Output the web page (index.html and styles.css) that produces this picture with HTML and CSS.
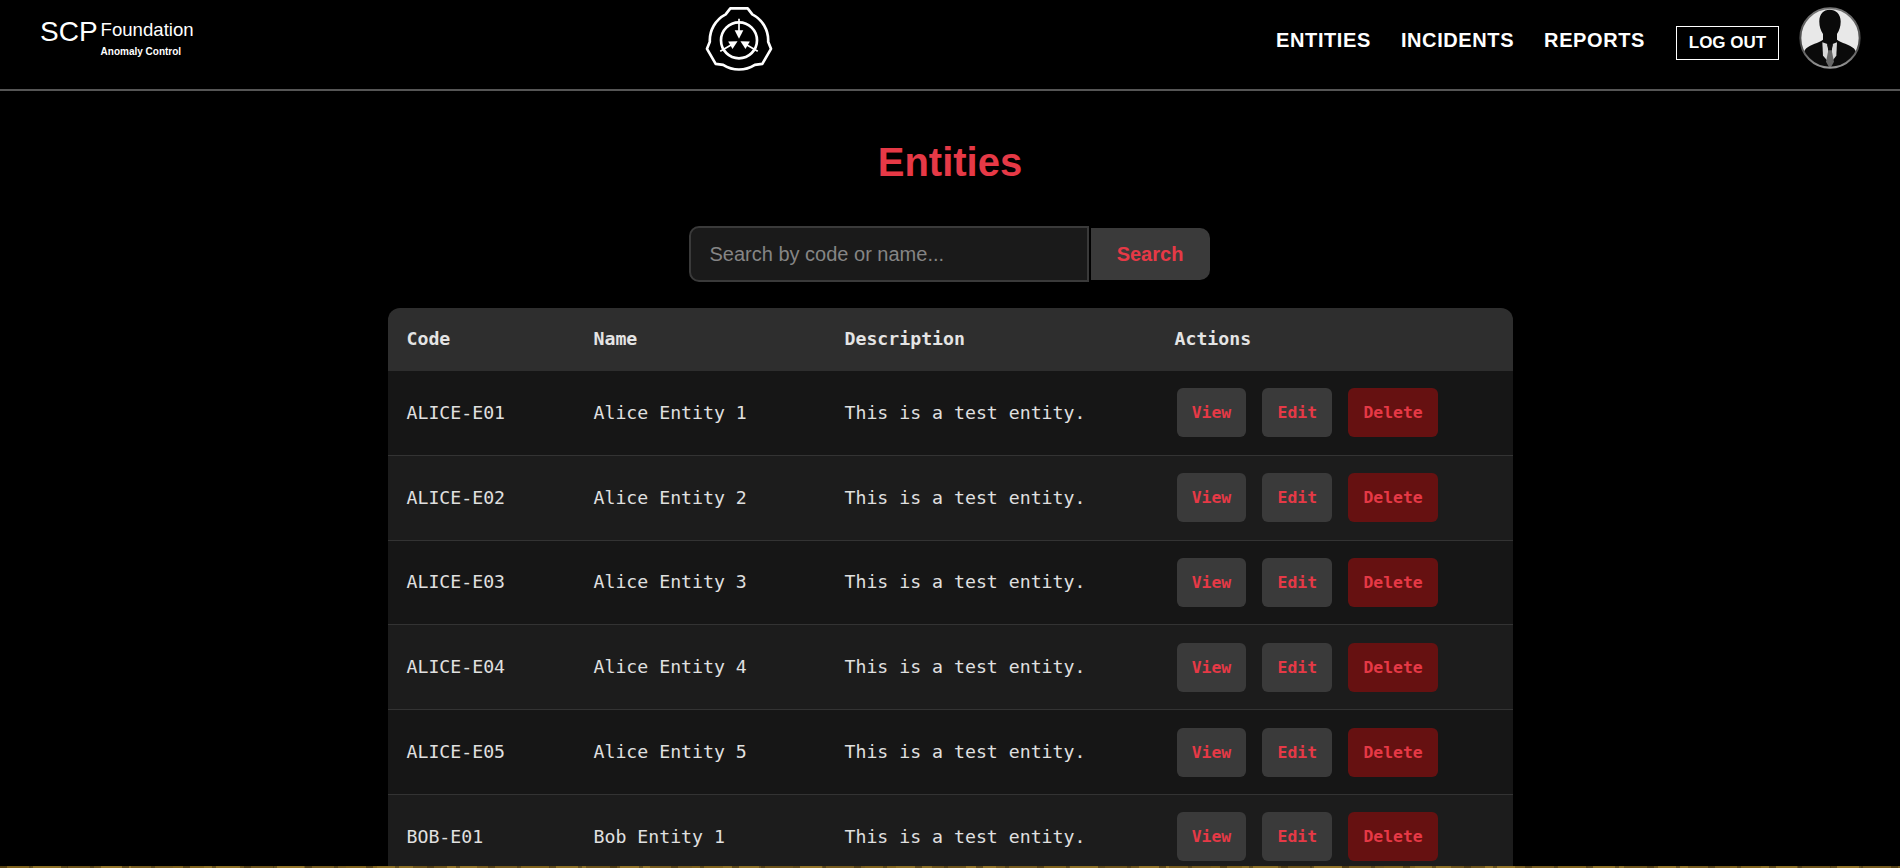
FILE: index.html
```html
<!DOCTYPE html>
<html lang="en">
<head>
<meta charset="utf-8">
<title>Entities</title>
<link rel="stylesheet" href="styles.css">
</head>
<body>
<div class="page">
  <header class="topbar">
    <a class="brand">
      <span class="brand-scp">SCP</span>
      <span class="brand-text">
        <span class="brand-name">Foundation</span>
        <span class="brand-sub">Anomaly Control</span>
      </span>
    </a>
    <svg class="seal" viewBox="0 0 360 270" aria-label="SCP logo">
      <path class="seal-line" d="M131 40 L145 22 H197 L211 40 A88 88 0 0 1 258.5 122.4 L267 143.5 L241 188.5 L218.5 191.6 A88 88 0 0 1 123.5 191.6 L101 188.5 L75 143.5 L83.5 122.4 A88 88 0 0 1 131 40Z"/>
      <circle class="seal-line" cx="171" cy="118" r="54"/>
      <g>
        <path class="seal-thin" d="M171 53V95"/>
        <path class="seal-head" d="M158 88H184L171 113Z"/>
      </g>
      <g transform="rotate(120 171 118)">
        <path class="seal-thin" d="M171 53V95"/>
        <path class="seal-head" d="M158 88H184L171 113Z"/>
      </g>
      <g transform="rotate(240 171 118)">
        <path class="seal-thin" d="M171 53V95"/>
        <path class="seal-head" d="M158 88H184L171 113Z"/>
      </g>
    </svg>
    <nav class="nav">
      <a class="nav-link">ENTITIES</a>
      <a class="nav-link">INCIDENTS</a>
      <a class="nav-link">REPORTS</a>
      <a class="logout">LOG OUT</a>
      <svg class="avatar" viewBox="0 0 186 186" aria-label="Profile">
        <defs>
          <clipPath id="disc"><circle cx="93" cy="93" r="89"/></clipPath>
          <linearGradient id="ring" x1="0" y1="0" x2="0" y2="1">
            <stop offset="0" stop-color="#777"/>
            <stop offset="0.6" stop-color="#444"/>
            <stop offset="1" stop-color="#999"/>
          </linearGradient>
        </defs>
        <g clip-path="url(#disc)">
          <rect class="av-bg" width="186" height="186"/>
          <path class="av-black" d="M92 8C73 8 60 22 61 45C61 59 65 70 72 81V98C58 108 36 112 22 124C14 132 10 147 6 186H180C176 147 172 132 164 124C150 112 128 108 114 98V81C121 70 125 59 125 45C126 22 111 8 92 8Z"/>
          <path class="av-shirt" d="M70 106L85 111L93 170L72 146Z"/>
          <path class="av-shirt" d="M114 106L101 111L93 170L112 146Z"/>
          <path class="av-knot" d="M84 112H102L97 130H89Z"/>
          <path class="av-tie" d="M88 130H98L105 164L93 186L81 164Z"/>
        </g>
        <circle class="av-ring" cx="93" cy="93" r="89" stroke="url(#ring)"/>
      </svg>
    </nav>
  </header>

  <main class="content">
    <h1 class="title">Entities</h1>
    <form class="search">
      <input class="search-input" type="text" placeholder="Search by code or name...">
      <button class="search-btn" type="button">Search</button>
    </form>
    <table class="entities">
      <colgroup>
        <col class="col-code"><col class="col-name"><col class="col-desc"><col class="col-actions">
      </colgroup>
      <thead>
        <tr><th>Code</th><th>Name</th><th>Description</th><th>Actions</th></tr>
      </thead>
      <tbody>
        <tr>
          <td>ALICE-E01</td><td>Alice Entity 1</td><td>This is a test entity.</td>
          <td><div class="actions"><a class="btn">View</a><a class="btn">Edit</a><a class="btn btn-danger">Delete</a></div></td>
        </tr>
        <tr>
          <td>ALICE-E02</td><td>Alice Entity 2</td><td>This is a test entity.</td>
          <td><div class="actions"><a class="btn">View</a><a class="btn">Edit</a><a class="btn btn-danger">Delete</a></div></td>
        </tr>
        <tr>
          <td>ALICE-E03</td><td>Alice Entity 3</td><td>This is a test entity.</td>
          <td><div class="actions"><a class="btn">View</a><a class="btn">Edit</a><a class="btn btn-danger">Delete</a></div></td>
        </tr>
        <tr>
          <td>ALICE-E04</td><td>Alice Entity 4</td><td>This is a test entity.</td>
          <td><div class="actions"><a class="btn">View</a><a class="btn">Edit</a><a class="btn btn-danger">Delete</a></div></td>
        </tr>
        <tr>
          <td>ALICE-E05</td><td>Alice Entity 5</td><td>This is a test entity.</td>
          <td><div class="actions"><a class="btn">View</a><a class="btn">Edit</a><a class="btn btn-danger">Delete</a></div></td>
        </tr>
        <tr>
          <td>BOB-E01</td><td>Bob Entity 1</td><td>This is a test entity.</td>
          <td><div class="actions"><a class="btn">View</a><a class="btn">Edit</a><a class="btn btn-danger">Delete</a></div></td>
        </tr>
      </tbody>
    </table>
  </main>
  <div class="strip"></div>
</div>
</body>
</html>
```
FILE: styles.css
```css
* { box-sizing: border-box; }
html, body { margin: 0; height: 100%; overflow: hidden; background: #000; }
body { font-family: "Liberation Sans", Arial, sans-serif; color: #fff; }

.page { height: 868px; display: flex; flex-direction: column; }

.topbar {
  flex: none;
  height: 91px;
  border-bottom: 2px solid #555;
  display: flex;
  justify-content: space-between;
  align-items: flex-start;
  padding: 0 39px 0 40px;
}
.brand { display: flex; align-items: flex-start; padding-top: 17px; }
.brand-scp { font-size: 28px; line-height: 30px; margin-right: 3px; }
.brand-text { display: flex; flex-direction: column; padding-top: 2px; }
.brand-name { font-size: 18.6px; line-height: 21px; }
.brand-sub { font-size: 10px; font-weight: 700; line-height: 12px; margin-top: 6px; }

.seal { width: 120px; height: 90px; display: block; flex: none; margin: 1px 0 0 15px; }
.seal-line { fill: none; stroke: #fff; stroke-width: 8; stroke-linejoin: round; }
.seal-thin { fill: none; stroke: #fff; stroke-width: 5; }
.seal-head { fill: #fff; }

.nav { display: flex; align-items: flex-start; justify-content: flex-end; }
.nav-link {
  font-size: 20px;
  font-weight: 700;
  letter-spacing: 0.6px;
  line-height: 24px;
  margin-top: 28px;
  margin-right: 30px;
}
.logout {
  margin-top: 26px;
  margin-left: 1px;
  width: 103px;
  height: 34px;
  border: 1.5px solid #fff;
  font-size: 17px;
  font-weight: 700;
  line-height: 31px;
  text-align: center;
}
.avatar { width: 62px; height: 62px; margin: 7px 0 0 20px; display: block; flex: none; }
.av-bg { fill: #e8e8e8; }
.av-black { fill: #0a0a0a; }
.av-shirt { fill: #d8d8d8; }
.av-knot { fill: #111; }
.av-tie { fill: #666; }
.av-ring { fill: none; stroke-width: 6; }

.content { flex: 1; min-height: 0; overflow: hidden; display: flex; flex-direction: column; align-items: center; }
.title {
  margin: 48px 0 0;
  font-size: 40px;
  line-height: 46px;
  font-weight: 700;
  color: #e63946;
}
.search { display: flex; align-items: center; margin: 41px 2px 0 0; }
.search-input {
  width: 400px;
  height: 56px;
  padding: 0 19px;
  background: #1a1a1a;
  border: 2px solid #3a3a3a;
  border-radius: 10px 0 0 10px;
  color: #ddd;
  font: 20px "Liberation Sans", Arial, sans-serif;
  outline: none;
}
.search-input::placeholder { color: #858585; opacity: 1; }
.search-btn {
  width: 119px;
  height: 52px;
  margin-left: 2px;
  background: #3a3a3a;
  border: 0;
  border-radius: 0 10px 10px 0;
  color: #e63946;
  font: 700 20px "Liberation Sans", Arial, sans-serif;
}

.entities {
  flex: none;
  width: 1125px;
  margin-top: 26px;
  border-collapse: separate;
  border-spacing: 0;
  table-layout: fixed;
  font-family: "DejaVu Sans Mono", "Liberation Mono", monospace;
  font-size: 18.2px;
  color: #e0e0e0;
}
.col-code { width: 187px; }
.col-name { width: 251px; }
.col-desc { width: 330px; }
.col-actions { width: 357px; }
.entities th {
  height: 63px;
  padding: 0 19px 2px;
  background: #2e2e2e;
  text-align: left;
  font-weight: 700;
  color: #e4e4e4;
}
.entities th:first-child { border-top-left-radius: 12px; }
.entities th:last-child { border-top-right-radius: 12px; }
.entities td {
  height: 84.8px;
  padding: 0 19px 1px;
  border-bottom: 1px solid #333;
  background: #161616;
}
.entities tbody tr:nth-child(even) td { background: #1c1c1c; }

.actions { display: flex; gap: 16px; margin: 1px 0 0 2px; }
.btn {
  height: 49px;
  padding: 0 15.2px;
  display: flex;
  align-items: center;
  background: #3a3a3a;
  border-radius: 6px;
  color: #e63946;
  font-size: 16.4px;
  font-weight: 700;
}
.btn-danger { background: #661111; }

.strip {
  flex: none;
  height: 2px;
  background:
    repeating-linear-gradient(90deg, rgba(60,44,12,.6) 0 7px, transparent 7px 29px, rgba(50,38,12,.45) 29px 33px, transparent 33px 61px),
    repeating-linear-gradient(90deg, #7f621c 0 31px, #8d7026 31px 67px, #6c531a 67px 101px, #937429 101px 131px, #765b1e 131px 173px);
}
```
